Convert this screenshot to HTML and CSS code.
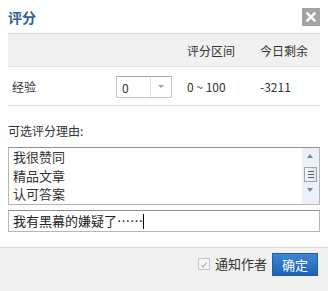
FILE: index.html
```html
<!DOCTYPE html>
<html lang="zh-CN">
<head>
    <meta charset="UTF-8">
    <title>评分</title>
    <link rel="stylesheet" href="styles.css">
</head>
<body>
    <div class="dialog">
        <div class="title-bar">
            <span class="title">评分</span>
            <span class="close">
                <svg width="18" height="18" viewBox="0 0 18 18">
                    <path d="M5.5 5.5 L12.5 12.5 M12.5 5.5 L5.5 12.5" stroke="#fff" stroke-width="2.4" stroke-linecap="square"/>
                </svg>
            </span>
        </div>

        <div class="content">
            <div class="score-table">
                <div class="score-head">
                    <span></span>
                    <span></span>
                    <span>评分区间</span>
                    <span>今日剩余</span>
                </div>
                <div class="score-row">
                    <span class="row-label">经验</span>
                    <span class="select-box">
                        <span class="select-value">0</span>
                        <span class="select-arrow"></span>
                    </span>
                    <span>0 ~ 100</span>
                    <span>-3211</span>
                </div>
            </div>

            <div class="reason-label">可选评分理由:</div>

            <div class="listbox">
                <div class="list-items">
                    <div>我很赞同</div>
                    <div>精品文章</div>
                    <div>认可答案</div>
                    <div>原创</div>
                </div>
                <div class="scrollbar">
                    <span class="arrow-up"></span>
                    <span class="thumb"><i></i><i></i><i></i></span>
                    <span class="arrow-down"></span>
                </div>
            </div>

            <div class="reason-input">我有黑幕的嫌疑了……<span class="caret"></span></div>
        </div>

        <div class="footer">
            <span class="checkbox">
                <svg width="12" height="12" viewBox="0 0 12 12">
                    <path d="M3 6.2 L5 8.5 L9.2 3" fill="none" stroke="#a9a9a9" stroke-width="1.3"/>
                </svg>
            </span>
            <span class="notify">通知作者</span>
            <button class="ok-btn">确定</button>
        </div>
    </div>
</body>
</html>
```

FILE: styles.css
```css
body {
    margin: 0;
    background: #fff;
    font-family: "Noto Sans CJK SC", "Liberation Sans", sans-serif;
    font-size: 12px;
    color: #333;
}

.dialog {
    width: 328px;
}

.title-bar {
    height: 33px;
    padding: 0 8px;
    display: flex;
    align-items: center;
    justify-content: space-between;
}

.title {
    font-size: 14px;
    font-weight: bold;
    color: #30618f;
}

.close {
    width: 18px;
    height: 18px;
    background: #a3a3a3;
    display: flex;
}

.content {
    padding: 0 8px;
}

.score-head,
.score-row {
    display: grid;
    grid-template-columns: 108px 71px 73px 60px;
    align-items: center;
}

.score-head {
    height: 32px;
    background: #f1f1f1;
    border-top: 1px solid #d6d6d6;
    border-bottom: 1px solid #e2e2e2;
}

.score-row {
    height: 38px;
    border-bottom: 1px solid #dcdcdc;
}

.row-label {
    padding-left: 4px;
}

.select-box {
    width: 54px;
    height: 20px;
    border: 1px solid #c8c8c8;
    border-top-color: #a8a8a8;
    display: flex;
    align-items: center;
    margin-top: 2px;
}

.select-value {
    flex: 1;
    padding-left: 5px;
}

.select-arrow {
    width: 20px;
    height: 20px;
    border-left: 1px solid #e0e0e0;
    position: relative;
}

.select-arrow::after {
    content: "";
    position: absolute;
    left: 7px;
    top: 8px;
    border-left: 3px solid transparent;
    border-right: 3px solid transparent;
    border-top: 3px solid #a0a0a0;
}

.reason-label {
    margin-top: 16px;
    line-height: 18px;
    margin-bottom: 7px;
}

.listbox {
    height: 56px;
    border: 1px solid #b5b5b5;
    border-top-color: #8f8f8f;
    display: flex;
    overflow: hidden;
}

.list-items {
    flex: 1;
    padding-left: 4px;
    line-height: 18.5px;
    font-size: 13px;
    overflow: hidden;
}

.scrollbar {
    width: 17px;
    background: #eaf1f8;
    display: flex;
    flex-direction: column;
    align-items: center;
}

.arrow-up,
.arrow-down {
    height: 15px;
    width: 17px;
    position: relative;
}

.arrow-up::after,
.arrow-down::after {
    content: "";
    position: absolute;
    left: 5px;
    border-left: 3.5px solid transparent;
    border-right: 3.5px solid transparent;
}

.arrow-up::after {
    top: 6px;
    border-bottom: 4px solid #808a95;
}

.arrow-down::after {
    top: 6px;
    border-top: 4px solid #808a95;
}

.thumb {
    width: 13px;
    height: 15px;
    margin-top: 4px;
    border: 1px solid #9aa7b5;
    background: linear-gradient(to right, #f4f7fa, #dde4ec);
    box-sizing: border-box;
    display: flex;
    flex-direction: column;
    justify-content: center;
    align-items: center;
    gap: 2px;
}

.thumb i {
    width: 6px;
    height: 1px;
    background: #56606b;
}

.reason-input {
    margin-top: 5px;
    height: 20px;
    border: 1px solid #b5b5b5;
    border-top-color: #8f8f8f;
    padding-left: 4px;
    line-height: 20px;
    font-size: 13px;
    color: #222;
    display: flex;
    align-items: center;
}

.caret {
    width: 1px;
    height: 15px;
    background: #000;
}

.footer {
    margin-top: 15px;
    height: 41px;
    background: #f1f1f1;
    border-top: 1px solid #d6d6d6;
    border-bottom: 1px solid #d6d6d6;
    display: flex;
    justify-content: flex-end;
    align-items: flex-start;
    padding: 5px 10px 0 0;
    box-sizing: content-box;
}

.checkbox {
    width: 12px;
    height: 12px;
    margin-top: 5px;
    border: 1px solid #c6c6c6;
    background: #f7f7f7;
    box-sizing: border-box;
    display: flex;
}

.notify {
    margin-left: 5px;
    font-size: 13px;
    line-height: 22px;
    color: #333;
}

.ok-btn {
    margin-left: 5px;
    width: 46px;
    height: 23px;
    border: 1px solid #1d5ea8;
    background: linear-gradient(#3e86d4, #1f63b3);
    color: #fff;
    font-family: inherit;
    font-size: 13px;
    padding: 0;
}
```
